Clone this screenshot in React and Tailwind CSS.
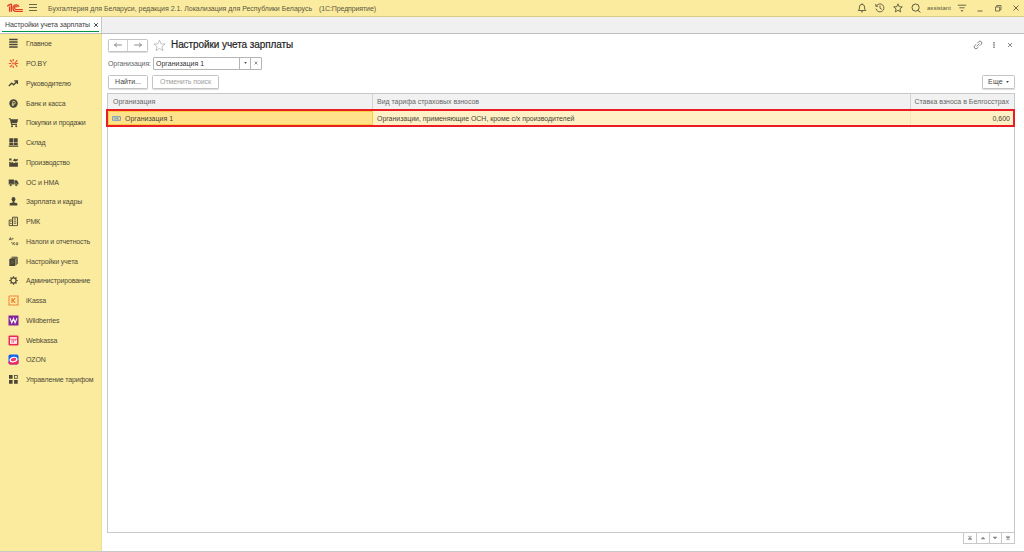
import React from "react";

const ink = "#4a4639";

const icons = {
  main: (
    <g stroke={ink} strokeWidth="1.3">
      <path d="M1.2 1.5h8.4M1.2 4h8.4M1.2 6.5h8.4M1.2 9h8.4" />
    </g>
  ),
  poby: (
    <g stroke="#e8562c" strokeWidth="1.2" fill="none">
      <path d="M.8 5.5h2.4M2 2l2 2M2 9l2-2M5.2 1v2.3M5.2 7.7V10M9.3 2L6.8 5.5 9.3 9M7.8 5.5h2.4" />
      <circle cx="5" cy="5.5" r=".9" fill="#e8562c" stroke="none" />
    </g>
  ),
  chart: (
    <path d="M.8 8l2.9-2.8 2 1.6L9 3.2M6.2 2.8h3.2v3.2" fill="none" stroke={ink} strokeWidth="1.3" />
  ),
  bank: (
    <g>
      <circle cx="5.5" cy="5.5" r="4.2" fill={ink} />
      <path d="M4.8 8V3.4h1.2a1.3 1.3 0 0 1 0 2.6H3.8M3.8 7h2.4" fill="none" stroke="#e9dc94" strokeWidth=".8" />
    </g>
  ),
  cart: (
    <g fill={ink}>
      <path d="M.8 1.3h1.7l.4 1h7.3L9 6.3H3.8l.2.8h5v.9H3.2L1.9 2.2H.8z" />
      <circle cx="4" cy="9.2" r="1" />
      <circle cx="8.2" cy="9.2" r="1" />
    </g>
  ),
  stock: (
    <g fill={ink}>
      <path d="M1.3 1.3h3.9v3.6H1.3zM5.8 1.3h3.9v3.6H5.8zM1.3 5.5h3.9v2.6H1.3zM5.8 5.5h3.9v2.6H5.8zM.8 8.6h9.4v1.1H.8z" />
    </g>
  ),
  factory: (
    <path d="M1.2 9.8V4.6L3.6 6V4.4L6 6.2l1.2-.8h2.7v4.4zM1.2 1.5h2.3v2H1.2zM4.6 3.6l2.2-2 1 .8 1.9-.6v1.8L7.6 4.5z" fill={ink} />
  ),
  truck: (
    <g fill={ink}>
      <path d="M.7 2.6h5.2v4.8H.7zM6.4 3.2h2.4L10.4 5.4v2.2H6.4z" />
      <circle cx="2.8" cy="8" r="1.3" stroke="#faeb9e" strokeWidth=".4" />
      <circle cx="8.2" cy="8" r="1.3" stroke="#faeb9e" strokeWidth=".4" />
    </g>
  ),
  person: (
    <g fill={ink}>
      <ellipse cx="5.5" cy="3.3" rx="1.9" ry="2.2" />
      <path d="M4.7 5h1.6v1.4l3 .9v2.2H1.7V7.3l3-.9z" />
    </g>
  ),
  register: (
    <g fill="none" stroke={ink} strokeWidth=".9">
      <path d="M4.5 3.5V1.2h5v8.4h-5zM1.2 4h3.3v5.6H1.2zM5.6 3h2.6M2.2 5.7h1.3M2.2 7.5h1.3M5.7 5.2h2.6M5.7 7.2h2.6" />
    </g>
  ),
  taxes: (
    <g fill="none" stroke={ink} strokeWidth=".7">
      <path d="M1 4.2L2.4 1.5 3 4.2M1.5 3.4h1.6M4 4.2V2.4h1.6M3 6.2l1.4 1.2M5 6.3v2.6M7 6.3L5.2 7.5 7 8.9M8.3 6.8h1.4v1.9H8.1v-1z" />
    </g>
  ),
  books: (
    <g>
      <path d="M1.3 3h6v7h-6z" fill={ink} />
      <path d="M2.5 2.3h5.6v6.8M3.8 1.2h5.4v6.8" fill="none" stroke={ink} strokeWidth="1" />
      <path d="M3 5.2h2.6M3 7h2.6" stroke="#8e875f" strokeWidth=".5" />
    </g>
  ),
  gear: (
    <g fill="none" stroke={ink}>
      <circle cx="5.5" cy="5.5" r="2.6" strokeWidth="1.2" />
      <path d="M5.5 1.2v1.6M5.5 8.2v1.6M1.2 5.5h1.6M8.2 5.5h1.6M2.5 2.5l1 1M7.5 7.5l1 1M8.5 2.5l-1 1M3.5 7.5l-1 1" strokeWidth="1.2" />
    </g>
  ),
  ikassa: (
    <g fill="none" stroke="#ee7428">
      <rect x="1" y="1" width="9" height="9" strokeWidth="1.1" strokeDasharray="1.6 .3" />
      <path d="M4 3v5M7.3 3.2L4.8 5.5l2.5 2.3" strokeWidth="1.1" />
    </g>
  ),
  wildberries: (
    <g>
      <rect x=".5" y=".5" width="10" height="10" fill="#86259a" />
      <path d="M2 3.2l1.8 4.6L5.5 3.6l1.6 4.2L9 3.2" fill="none" stroke="#fff" strokeWidth="1.1" />
    </g>
  ),
  webkassa: (
    <g>
      <rect x=".5" y=".5" width="10" height="10" rx="1.2" fill="#ec2952" />
      <path d="M2 2.2h7v6.6H2z" fill="#fff" />
      <path d="M2 4.2h7M4 4.8v3M5.7 4.8v3M7.4 4.8v1.4" stroke="#ec2952" strokeWidth=".8" />
    </g>
  ),
  ozon: (
    <g>
      <rect x=".5" y=".5" width="10" height="10" rx="1.8" fill="#1662ef" />
      <path d="M.5 7.8L10.5 6v2.7a1.8 1.8 0 0 1-1.8 1.8H2.3A1.8 1.8 0 0 1 .5 8.7z" fill="#f4225f" />
      <ellipse cx="5.5" cy="5.6" rx="3.5" ry="2.2" transform="rotate(-12 5.5 5.6)" fill="#ef3b6b" stroke="#fff" strokeWidth="1.2" />
    </g>
  ),
  tiles: (
    <g fill={ink}>
      <path d="M1 1.1h3.6v3.6H1zM1 6h3.6v3.7H1zM6.1 6h3.6v3.7H6.1z" />
      <rect x="6.5" y="1.5" width="2.8" height="2.8" fill="none" stroke={ink} strokeWidth=".8" />
    </g>
  ),
};

const menu = [
  { icon: "main", label: "Главное" },
  { icon: "poby", label: "PO.BY" },
  { icon: "chart", label: "Руководителю" },
  { icon: "bank", label: "Банк и касса" },
  { icon: "cart", label: "Покупки и продажи" },
  { icon: "stock", label: "Склад" },
  { icon: "factory", label: "Производство" },
  { icon: "truck", label: "ОС и НМА" },
  { icon: "person", label: "Зарплата и кадры" },
  { icon: "register", label: "РМК" },
  { icon: "taxes", label: "Налоги и отчетность" },
  { icon: "books", label: "Настройки учета" },
  { icon: "gear", label: "Администрирование" },
  { icon: "ikassa", label: "iKassa" },
  { icon: "wildberries", label: "Wildberries" },
  { icon: "webkassa", label: "Webkassa" },
  { icon: "ozon", label: "OZON" },
  { icon: "tiles", label: "Управление тарифом" },
];

function Glyph({ d, className = "", width = 0.9 }) {
  return (
    <svg viewBox="0 0 10 10" className={`size-[10px] shrink-0 ${className}`} fill="none" stroke="currentColor" strokeWidth={width}>
      <path d={d} />
    </svg>
  );
}

const star = "M5 .8l1.2 2.9 3.1.2-2.4 2 .8 3L5 7.3 2.3 8.9l.8-3-2.4-2 3.1-.2z";

function TitleBar() {
  return (
    <header className="flex h-[17px] items-center border-b border-[#d9cd8b] bg-[#faeb9e] pl-[7px] text-[#5d583f]">
      <svg viewBox="0 0 16 10" className="h-[10px] w-[16px] shrink-0" fill="none" stroke="#e23a26">
        <path d="M.3 3.2L2.7 1.6M2.6 3.4V8.8M4.4 8.8V1.4H2.6" strokeWidth="1.3" />
        <path d="M12 3.8A3.2 3.2 0 1 0 9 8.4h6.8M10.4 4.3A1.5 1.5 0 1 0 9 6.5h6.8" strokeWidth="1.2" />
      </svg>
      <Glyph className="ml-[5px] mr-[10px] text-[#6b654a]" d="M1 1.5h8M1 4.5h8M1 7.5h8" width={1} />
      <span className="text-[7px] tracking-[-0.02px]">Бухгалтерия для Беларуси, редакция 2.1. Локализация для Республики Беларусь</span>
      <span className="ml-[7px] text-[7px] tracking-[-0.12px]">(1С:Предприятие)</span>
      <div className="ml-auto flex items-center pr-[3px]">
        <Glyph className="mr-[8px]" d="M1.2 7.5h7.6L7.6 6V4A2.6 2.6 0 0 0 2.4 4v2zM5 .4v1M4 8.8h2" />
        <Glyph className="mr-[8px]" d="M1.4 3A4 4 0 1 1 1 5.7M.8 1v2.3h2.3M5 2.6V5.3l1.8 1" />
        <Glyph className="mr-[8px]" d={star} />
        <Glyph className="mr-[6px]" d="M8.2 4.6A3.6 3.6 0 1 1 1 4.6 3.6 3.6 0 0 1 8.2 4.6M6.8 7.3L9.4 9.4" width={1} />
        <span className="mr-[6px] w-[24px] text-[6px] tracking-[0.02px]">assistant</span>
        <Glyph className="mr-[8px]" d="M.8 2.2h8.4M2.4 4.8h5.2M4 7l1 1.4L6 7" />
        <Glyph className="mr-[8px]" d="M2.5 8h5" />
        <Glyph className="mr-[8px]" d="M2.5 4h4.2v4H2.5zM3.7 4V2.5H8v4.2H6.7" width={0.8} />
        <Glyph d="M2.5 2.5l5 5M7.5 2.5l-5 5" width={0.9} />
      </div>
    </header>
  );
}

function Tabs() {
  return (
    <div className="flex h-[17px] border-b border-[#bfbfbf] bg-[#f0f0f0]">
      <div className="w-[102px] shrink-0 border-r border-[#c6c6c6] bg-white px-[2px]">
        <div className="flex h-[14px] w-full items-center pt-px pl-[3px]">
          <span className="w-[86px] shrink-0 text-[7px] tracking-[-0.08px] text-[#404040]">Настройки учета зарплаты</span>
          <Glyph className="text-[#444]" d="M3.2 3.2l3.6 3.6M6.8 3.2L3.2 6.8" width={1} />
        </div>
        <div className="h-px bg-[#009646]" />
      </div>
    </div>
  );
}

function Sidebar() {
  return (
    <nav className="w-[102px] shrink-0 border-r border-[#eedf95] bg-[#faeb9e]">
      {menu.map((item) => (
        <div key={item.icon} className="flex h-[19.76px] items-center pl-[8px]">
          <svg viewBox="0 0 11 11" className="mr-[7px] size-[11px] shrink-0">
            {icons[item.icon]}
          </svg>
          <span className="text-[7px] tracking-[-0.15px] text-[#4f4a38]">{item.label}</span>
        </div>
      ))}
    </nav>
  );
}

const button = "flex items-center justify-center rounded-[1.5px] border border-[#c4c4c4] bg-white shadow-[0_1px_1px_#dcdcdc] text-[7px]";

function PageHead() {
  return (
    <div className="flex h-[14px] items-center pl-px">
      <div className={`${button} h-[13px] w-[40px] text-[#8b8b8b]`}>
        <span className="flex h-full w-1/2 items-center justify-center border-r border-[#cfcfcf]">
          <Glyph d="M1.2 5h7.6M3.8 3L1.5 5l2.3 2" width={1} />
        </span>
        <span className="flex h-full w-1/2 items-center justify-center">
          <Glyph d="M1.2 5h7.6M6.2 3l2.3 2-2.3 2" width={1} />
        </span>
      </div>
      <svg viewBox="0 0 10 10" className="ml-[5px] size-[13px]" fill="none" stroke="#b0b0b0" strokeWidth=".6">
        <path d={star} />
      </svg>
      <h1 className="ml-[5px] text-[10px] tracking-[-0.08px] text-[#1f1f1f] [-webkit-text-stroke:0.2px]">Настройки учета зарплаты</h1>
      <div className="ml-auto flex items-center text-[#666]">
        <Glyph className="mr-[6px]" d="M4.3 3.2L5.8 1.7a1.7 1.7 0 0 1 2.5 2.5L6.8 5.7M5.6 6.8L4.2 8.2a1.7 1.7 0 0 1-2.5-2.5L3.2 4.3M3.6 6.3l2.8-2.7" width={0.8} />
        <Glyph className="mr-[6px]" d="M5 2v1.4M5 4.3v1.4M5 6.6v1.4" width={1.3} />
        <Glyph d="M3 3l4 4M7 3L3 7" width={0.8} />
      </div>
    </div>
  );
}

function Filter() {
  return (
    <div className="mt-[4px] flex h-[14px] items-center pl-px text-[7px]">
      <span className="w-[45px] tracking-[-0.1px] text-[#656565]">Организация:</span>
      <div className="flex h-[13px] w-[109px] rounded-[1px] border border-[#b5b5b5] bg-white text-[#333]">
        <span className="flex flex-1 items-center pl-[2px]">Организация 1</span>
        <span className="flex w-[11px] items-center justify-center border-l border-[#b5b5b5] text-[#555]">
          <svg viewBox="0 0 4 3" className="h-[2px] w-[3px]" fill="currentColor">
            <path d="M0 0h4L2 3z" />
          </svg>
        </span>
        <span className="flex w-[11px] items-center justify-center border-l border-[#b5b5b5] text-[#777]">
          <Glyph d="M3.6 3.6l2.8 2.8M6.4 3.6L3.6 6.4" width={0.8} />
        </span>
      </div>
    </div>
  );
}

function Toolbar() {
  return (
    <div className="mt-[4px] flex h-[15px] items-center pl-px">
      <div className={`${button} h-[14px] w-[40px] text-[#444]`}>Найти...</div>
      <div className={`${button} ml-[4px] h-[14px] w-[67px] text-[#a0a0a0]`}>
        <span className="tracking-[-0.08px]">Отменить поиск</span>
      </div>
      <div className={`${button} ml-auto h-[14px] w-[33px] gap-[3px] text-[#444]`}>
        <span className="tracking-[0.2px]">Еще</span>
        <svg viewBox="0 0 4 3" className="h-[2px] w-[3px]" fill="currentColor">
          <path d="M0 0h4L2 3z" />
        </svg>
      </div>
    </div>
  );
}

function Table() {
  return (
    <div className="mt-[4px] flex h-[440px] flex-col border border-[#c8c8c8] bg-white text-[7px]">
      <div className="flex h-[15px] shrink-0 items-center bg-[#f1f1f1] text-[#666]">
        <span className="flex h-full w-[265px] items-center border-r border-[#d4d4d4] pl-[5px]">Организация</span>
        <span className="flex h-full w-[538px] items-center border-r border-[#d4d4d4] pl-[4px] tracking-[-0.03px]">Вид тарифа страховых взносов</span>
        <span className="flex-1 pr-[5px] text-right">Ставка взноса в Белгосстрах</span>
      </div>
      <div className="-mr-px -ml-[2px] flex h-[18px] shrink-0 border-2 border-[#ea1c24] bg-[#fff1c5] text-[#4a4538]">
        <span className="flex w-[265px] items-center border border-[#f5cf45] bg-[#ffe28a] pl-[3px]">
          <svg viewBox="0 0 9 5" className="mr-[4px] h-[5px] w-[9px]" fill="none" stroke="#6f9cc6" strokeWidth="1">
            <path d="M.5.7h8M.5 4.3h8M.6.7v3.6M8.4.7v3.6M3 1v3M5.8 1v3M4 2.5h1" />
          </svg>
          Организация 1
        </span>
        <span className="flex w-[538px] items-center border-r border-[#f6e8b9] pl-[4px] tracking-[-0.04px]">
          Организации, применяющие ОСН, кроме с/х производителей
        </span>
        <span className="flex flex-1 items-center justify-end pr-[3px]">0,600</span>
      </div>
    </div>
  );
}

const pager = [
  "M3 3.4h4M5 4.2L3.4 6h3.2zM3 6.6h4",
  "M5 4L3.2 6h3.6z",
  "M5 6L3.2 4h3.6z",
  "M3 3.4h4M5 5.8L3.4 4h3.2zM3 6.6h4",
];

function Pager() {
  return (
    <div className="-mt-px flex h-[12px] w-[52px] self-end border border-[#c8c8c8]">
      {pager.map((d) => (
        <span key={d} className="flex flex-1 items-center justify-center border-r border-[#c8c8c8] last:border-r-0">
          <svg viewBox="0 0 10 10" className="size-[10px]" fill="#8a8a8a" stroke="#8a8a8a" strokeWidth=".6">
            <path d={d} />
          </svg>
        </span>
      ))}
    </div>
  );
}

export default function App() {
  return (
    <div className="flex h-[552px] w-[1024px] flex-col overflow-hidden border-b border-[#c9c9c9] bg-white font-['Liberation_Sans',Arial,sans-serif] leading-none whitespace-nowrap">
      <TitleBar />
      <Tabs />
      <div className="flex min-h-0 flex-1">
        <Sidebar />
        <main className="flex flex-1 flex-col pt-[4px] pr-[9px] pl-[5px]">
          <PageHead />
          <Filter />
          <Toolbar />
          <Table />
          <Pager />
        </main>
      </div>
    </div>
  );
}
